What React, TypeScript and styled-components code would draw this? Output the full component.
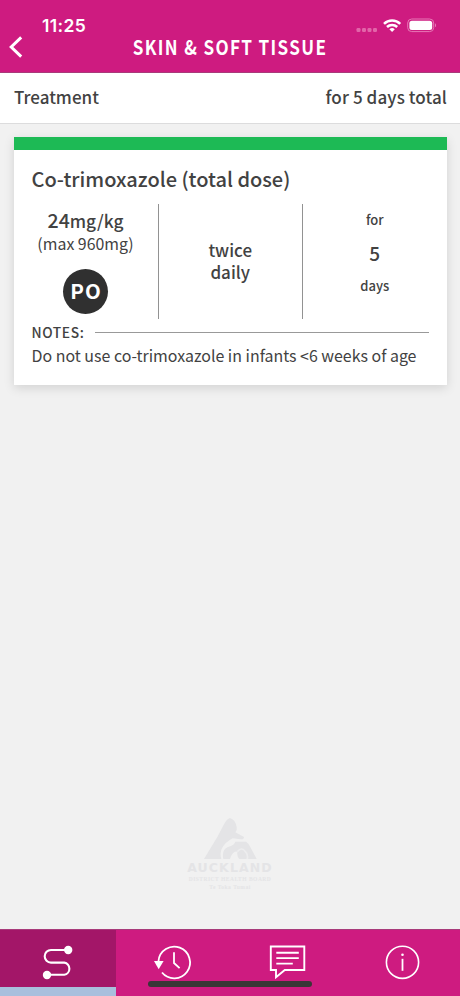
import React from "react";
import styled, { createGlobalStyle } from "styled-components";

const Global = createGlobalStyle`
  * { box-sizing: border-box; }
  body { margin: 0; background: #f1f1f1; font-family: "Noto Sans CJK SC", "Noto Sans", sans-serif; color: #424242; }
`;

const Screen = styled.div`
  width: 460px;
  height: 996px;
  display: flex;
  flex-direction: column;
  overflow: hidden;
  background: #f1f1f1;
`;

const Header = styled.header`
  height: 73px;
  flex: none;
  background: #ce1b80;
  border-bottom: 1px solid #a83b7a;
  color: #fff;
`;

const StatusBar = styled.div`
  height: 35px;
  padding: 15px 24.5px 0 42px;
  display: flex;
  justify-content: space-between;
`;

const Clock = styled.span`
  font: 600 17.5px/21px Inter, sans-serif;
  letter-spacing: 0.35px;
`;

const TitleRow = styled.div`
  height: 24px;
  display: grid;
  grid-template-columns: 60px 1fr 60px;
  align-items: center;
`;

const BackIcon = styled.svg`
  display: block;
  margin-left: 8px;
`;

const Title = styled.h1`
  margin: -2px 0 0;
  font-size: 20.5px;
  line-height: 24px;
  font-weight: 700;
  letter-spacing: 1.6px;
  text-align: center;
  white-space: nowrap;
  transform: scaleX(0.835);
`;

const Summary = styled.section`
  height: 51px;
  flex: none;
  padding: 0 13px 2px 14px;
  display: flex;
  align-items: center;
  justify-content: space-between;
  background: #fff;
  border-bottom: 1px solid #dcdcdd;
`;

const Label = styled.span<{ $size: number; $weight?: number; $track?: number; $line?: number }>`
  font-size: ${(p) => p.$size}px;
  font-weight: ${(p) => p.$weight ?? 500};
  letter-spacing: ${(p) => p.$track ?? 0}px;
  line-height: ${(p) => p.$line ?? 24}px;
  white-space: nowrap;
`;

const Content = styled.main`
  flex: 1;
  display: flex;
  flex-direction: column;
  padding: 13px 13.5px 38px;
`;

const Card = styled.article`
  height: 248px;
  border-top: 13px solid #1dba55;
  padding: 17px 18px 0;
  background: #fff;
  box-shadow: 0 3px 10px rgba(0, 0, 0, 0.13);
  display: flex;
  flex-direction: column;
`;

const DoseGrid = styled.div`
  margin-top: 13px;
  height: 115px;
  display: grid;
  grid-template-columns: 127px 144.5px 1fr;
  margin-right: -18px;
`;

const Cell = styled.div<{ $divided?: boolean; $pad?: number }>`
  display: flex;
  flex-direction: column;
  align-items: center;
  text-align: center;
  padding-top: ${(p) => p.$pad ?? 0}px;
  border-right: ${(p) => (p.$divided ? "1px solid #929292" : "none")};
`;

const DoseCell = styled(Cell)`
  padding-right: 18px;
`;

const Route = styled.div`
  width: 45px;
  height: 45px;
  flex: none;
  margin-top: 15px;
  padding: 0 0 3px 1px;
  border-radius: 50%;
  background: #303030;
  color: #fff;
  display: flex;
  align-items: center;
  justify-content: center;
`;

const NotesHead = styled.div`
  display: flex;
  align-items: center;
  gap: 11px;
  height: 22px;
  margin-top: 2px;
`;

const Rule = styled.div`
  flex: 1;
  height: 1px;
  margin-top: 1px;
  background: #999;
`;

const Watermark = styled.footer`
  margin-top: auto;
  display: flex;
  flex-direction: column;
  align-items: center;
  color: #e4e4e6;
`;

const MarkName = styled.div`
  font: 700 12.5px/14px "DejaVu Sans", sans-serif;
  letter-spacing: 1.1px;
`;

const MarkSmall = styled.div`
  font: 700 5.5px/8px "Liberation Serif", serif;
  letter-spacing: 0.5px;
  white-space: nowrap;
`;

const TabBar = styled.nav`
  position: relative;
  height: 67px;
  flex: none;
  display: grid;
  grid-template-columns: 115.5px 114px 116px 114.5px;
  background: #ce1b80;
`;

const Tab = styled.button<{ $active?: boolean }>`
  border: 0;
  border-top: 1px solid #a83b7a;
  border-bottom: ${(p) => (p.$active ? "9px solid #a9bfdd" : "none")};
  padding: 13px 0 0;
  background: ${(p) => (p.$active ? "#a31668" : "transparent")};
  display: flex;
  align-items: flex-start;
  justify-content: center;
`;

const HomeIndicator = styled.div`
  position: absolute;
  left: 148px;
  bottom: 9px;
  width: 164px;
  height: 6px;
  border-radius: 3px;
  background: #393637;
`;

const StatusIcons = () => (
  <svg width="80" height="21" viewBox="355 15 80 21">
    <g fill="#e265a9">
      <rect x="355.5" y="28" width="4" height="4" rx="1.2" />
      <rect x="361" y="28" width="4" height="4" rx="1.2" />
      <rect x="366.5" y="28" width="4" height="4" rx="1.2" />
      <rect x="372" y="28" width="4" height="4" rx="1.2" />
    </g>
    <g fill="none" stroke="#fff" strokeWidth="2.5">
      <path d="M383 23.8a11.5 11.5 0 0 1 16.2 0" />
      <path d="M386 27a7.3 7.3 0 0 1 10.2 0" />
    </g>
    <path d="M388.4 29.3a4 4 0 0 1 5.4 0L391.1 32z" fill="#fff" />
    <rect x="406.7" y="19" width="26" height="12.6" rx="4" fill="none" stroke="#e778b6" />
    <rect x="408.4" y="20.7" width="22.8" height="9.3" rx="2.5" fill="#fff" />
    <path d="M434 23.5q1.2.4 1.2 1.8t-1.2 1.8z" fill="#e778b6" />
  </svg>
);

const EmblemIcon = () => (
  <svg width="56" height="44" viewBox="54 8 168 132" fill="#e4e4e6">
    <path d="M60 134 L100 68 L120 30 Q128 14 138 11 Q154 16 158 38 Q160 46 154 54 L180 68 Q180 76 170 75 L146 72 Q122 84 113 104 Q107 118 112 134z" />
    <path d="M118 134Q112 106 132 98Q152 92 154 82L186 82Q196 88 200 100L218 134H166Q158 126 160 112Q146 108 138 134z" />
    <path d="M160 112Q174 96 184 112Q192 120 190 134" fill="none" stroke="#ededee" strokeWidth="5" />
  </svg>
);

const PathwayIcon = () => (
  <svg width="40" height="38" viewBox="38 943 40 38">
    <path
      d="M66.5 950H51a6.3 6.3 0 0 0 0 12.6h13.3a6.2 6.2 0 0 1 0 12.2H47"
      fill="none" stroke="#fff" strokeWidth="2.1"
    />
    <circle cx="68.2" cy="950" r="4.2" fill="#fff" />
    <circle cx="47" cy="975" r="4.2" fill="#fff" />
  </svg>
);

const HistoryIcon = () => (
  <svg width="40" height="38" viewBox="153 943 40 38">
    <g fill="none" stroke="#fff" strokeWidth="1.8">
      <path d="M158.5 961a15.8 15.8 0 1 1 3.5 11.5" />
      <path d="M174 952.3v10.7l5.6 5.2" />
    </g>
    <path d="M154 961h9.6l-4.9 8.2z" fill="#fff" />
  </svg>
);

const CommentIcon = () => (
  <svg width="40" height="38" viewBox="268 943 40 38" fill="none" stroke="#fff" strokeWidth="1.9">
    <path d="M270.8 946.5h33.5V970H284.8l-8.8 7.3V970h-5.2z" />
    <path d="M276.3 952.8h22.5M276.3 958.1h22.5M276.3 963.6h16.5" />
  </svg>
);

const InfoIcon = () => (
  <svg width="40" height="38" viewBox="382 943 40 38">
    <circle cx="401.5" cy="962.3" r="16.1" fill="none" stroke="#fff" strokeWidth="1.6" />
    <path d="M401.5 958.8v12" stroke="#fff" strokeWidth="1.8" />
    <circle cx="401.5" cy="954.8" r="1.3" fill="#fff" />
  </svg>
);

export default function App() {
  return (
    <Screen>
      <Global />
      <Header>
        <StatusBar>
          <Clock>11:25</Clock>
          <StatusIcons />
        </StatusBar>
        <TitleRow>
          <BackIcon width="16" height="24" viewBox="0 0 16 24">
            <path d="M13.2 2.4 3.2 12 13.2 21.7" fill="none" stroke="#fff" strokeWidth="3" />
          </BackIcon>
          <Title>SKIN &amp; SOFT TISSUE</Title>
        </TitleRow>
      </Header>
      <Summary>
        <Label $size={17}>Treatment</Label>
        <Label $size={17} $track={0.1}>for 5 days total</Label>
      </Summary>
      <Content>
        <Card>
          <Label $size={20}>Co-trimoxazole (total dose)</Label>
          <DoseGrid>
            <DoseCell $divided $pad={3}>
              <Label $size={19.5} $line={25}>
                24<Label $size={17.3}>mg/kg</Label>
              </Label>
              <Label $size={15.9} $weight={400} $line={21}>(max 960mg)</Label>
              <Route>
                <Label $size={20.5} $weight={700} $track={1}>PO</Label>
              </Route>
            </DoseCell>
            <Cell $divided $pad={35}>
              <Label $size={17} $line={22}>twice<br />daily</Label>
            </Cell>
            <Cell $pad={4}>
              <Label $size={13}>for</Label>
              <Label $size={19} $line={42}>5</Label>
              <Label $size={13}>days</Label>
            </Cell>
          </DoseGrid>
          <NotesHead>
            <Label $size={13.8} $track={0.6}>NOTES:</Label>
            <Rule />
          </NotesHead>
          <Label $size={15.95} $weight={400}>Do not use co-trimoxazole in infants &lt;6 weeks of age</Label>
        </Card>
        <Watermark>
          <EmblemIcon />
          <MarkName>AUCKLAND</MarkName>
          <MarkSmall>DISTRICT HEALTH BOARD</MarkSmall>
          <MarkSmall>Te Toka Tumai</MarkSmall>
        </Watermark>
      </Content>
      <TabBar>
        <Tab $active aria-label="Pathway"><PathwayIcon /></Tab>
        <Tab aria-label="History"><HistoryIcon /></Tab>
        <Tab aria-label="Comments"><CommentIcon /></Tab>
        <Tab aria-label="Information"><InfoIcon /></Tab>
        <HomeIndicator />
      </TabBar>
    </Screen>
  );
}
